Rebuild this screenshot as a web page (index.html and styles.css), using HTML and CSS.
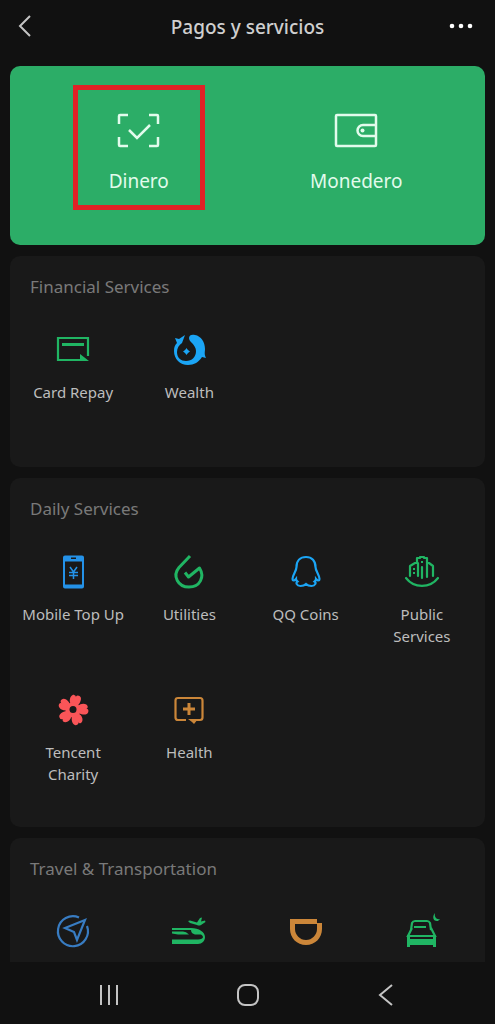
FILE: index.html
```html
<!DOCTYPE html>
<html lang="es">
<head>
<meta charset="utf-8">
<meta name="viewport" content="width=device-width, initial-scale=1">
<title>Pagos y servicios</title>
<link rel="stylesheet" href="styles.css">
</head>
<body>
<header class="topbar">
  <button class="icon-button" aria-label="Volver"><svg width="20" height="28" viewBox="0 0 20 28"><path class="line" d="M16 3 6 13l10 10"/></svg></button>
  <h1 class="title">Pagos y servicios</h1>
  <button class="icon-button" aria-label="Más"><svg width="24" height="28" viewBox="0 0 24 28" fill="#fff"><circle cx="3" cy="13" r="2.3"/><circle cx="12" cy="13" r="2.3"/><circle cx="21" cy="13" r="2.3"/></svg></button>
</header>

<main class="content">
  <section class="hero">
    <button class="hero-item hero-item-marked">
      <svg width="48" height="48" viewBox="0 0 48 48"><path class="hero-line" d="M4 17V9q0-1 1-1h8M34 8h8q1 0 1 1v8M43 30v8q0 1-1 1h-8M13 39H5q-1 0-1-1v-8M14 23l8 8 13-13"/></svg>
      <span>Dinero</span>
    </button>
    <button class="hero-item">
      <svg width="48" height="48" viewBox="0 0 48 48"><rect class="hero-line" x="4" y="8" width="40" height="31" rx="1"/><path class="hero-line" d="M44 18H31a5.500 5.500 0 0 0 0 11h13"/><circle cx="30.500" cy="23.500" r="2" fill="#e2fbec"/></svg>
      <span>Monedero</span>
    </button>
  </section>

  <section class="card">
    <h2 class="card-title">Financial Services</h2>
    <div class="grid">
      <button class="service green">
        <svg width="40" height="40" viewBox="0 0 40 40"><path class="stroke" d="M35 26V8H5v22h23"/><path class="fill" d="M9 13h22v3H9zM27 24l9 7h-9z"/></svg>
        <span>Card Repay</span>
      </button>
      <button class="service sky">
        <svg width="40" height="40" viewBox="0 0 40 40"><path class="fill" d="M6 8l4 1 6-4-3 8c-3 2-5 5-5 9 0 6 4 9 9 9 6 0 10-4 10-10 0-3-2-6-4-8-2-2-3-3-3-5 0-3 3-4 6-3 6 1 10 7 10 14 0 3-1 5 1 9l-4-1c-3 5-8 8-14 8C11 35 5 29 5 21c0-4 1-6 3-8z"/><path class="fill" d="M17.500 18Q18.500 20.500 21 21.500q-2.500 1-3.500 3.500Q16.500 22.500 14 21.500q2.500-1 3.500-3.500z"/><circle class="fill" cx="17.500" cy="21.500" r="2"/></svg>
        <span>Wealth</span>
      </button>
    </div>
  </section>

  <section class="card">
    <h2 class="card-title">Daily Services</h2>
    <div class="grid">
      <button class="service blue">
        <svg width="40" height="40" viewBox="0 0 40 40"><path class="fill" fill-rule="evenodd" d="M12 3.500h17q2 0 2 2v29q0 2-2 2H12q-2 0-2-2v-29q0-2 2-2zm0 6v23h17v-23zM18 5.500V7h5V5.500z"/><path class="stroke thin" d="M17 15l3.500 5 3.500-5M20.500 20v7M16 20.500h9M16 23.500h9"/></svg>
        <span>Mobile Top Up</span>
      </button>
      <button class="service green">
        <svg width="40" height="40" viewBox="0 0 40 40"><path class="stroke bold" d="M21 4 10 15.500C3 24 9 35 20 35c11 0 16-10 10.500-19L19.500 25 16 20.500"/></svg>
        <span>Utilities</span>
      </button>
      <button class="service sky">
        <svg width="40" height="40" viewBox="0 0 40 40"><path class="stroke" d="M20 5c-6 0-9.500 4-9.500 10 0 4-4 8-4 12 0 2 2 2 3.500 0 0 1 1 2 1.500 2.500-2 1-1 4.500 3 4.500 2.500 0 4.500-1 5.500-2 1 1 3 2 5.500 2 4 0 5-3.500 3-4.500.5-.5 1.500-1.500 1.500-2.500 1.500 2 3.500 2 3.500 0 0-4-4-8-4-12C29.500 9 26 5 20 5z"/></svg>
        <span>QQ Coins</span>
      </button>
      <button class="service green">
        <svg width="40" height="40" viewBox="0 0 40 40"><path class="stroke round" d="M4 26c8 10.500 24 10.500 32 0M8 24V14l5-3h3v13M15 11V6h3V5h4v1h3v19M25 11h2l4 3v10M20 15v11"/><path class="fill" d="M11 16h2v2h-2zM11 20h2v2h-2zM19 9h2v2h-2z"/></svg>
        <span>Public Services</span>
      </button>
      <button class="service red">
        <svg width="40" height="40" viewBox="0 0 40 40">
          <defs><g id="petal"><path d="M-2-2-5-8C-6-12-4-15-2-15Q0-15 0-13.500 1-16 3.500-15C6-14 6-11 5-8L2-2z"/></g></defs>
          <g class="fill" transform="translate(20 20)"><use href="#petal" transform="rotate(12)"/><use href="#petal" transform="rotate(84)"/><use href="#petal" transform="rotate(156)"/><use href="#petal" transform="rotate(228)"/><use href="#petal" transform="rotate(300)"/><circle r="7.500"/></g>
          <circle cx="20" cy="19.500" r="3.500" fill="#191919"/>
        </svg>
        <span>Tencent Charity</span>
      </button>
      <button class="service amber">
        <svg width="40" height="40" viewBox="0 0 40 40"><path class="stroke" d="M17 30H9q-2.500 0-2.500-2.500v-17Q6.500 8 9 8h22q2.500 0 2.500 2.500v17Q33.500 30 31 30h-4"/><path class="fill" d="M18.500 13h3v4.500H26v3h-4.500V25h-3v-4.500H14v-3h4.500zM19 29h10l-4 5-2-2z"/></svg>
        <span>Health</span>
      </button>
    </div>
  </section>

  <section class="card">
    <h2 class="card-title">Travel &amp; Transportation</h2>
    <div class="grid">
      <button class="service steel" aria-label="Mobility">
        <svg width="40" height="40" viewBox="0 0 40 40"><path class="stroke" d="M26 5.500A15 15 0 1 0 34 14"/><path class="stroke" d="M32 8 12 16l9 4 3 8z"/></svg>
      </button>
      <button class="service green" aria-label="Rail and flights">
        <svg width="40" height="40" viewBox="0 0 40 40"><path class="fill" fill-rule="evenodd" d="M3 16h19c8 0 14 4 14 9 0 4-3 7-7 7H3v-4.500h26c3 0 5-1 5-2.500q0-1.500-2-2.500h-6q-4-1-4-4.500H3z"/><path class="fill" d="M3 19.500h11q3 0 6 3H9l-6-1z"/><path class="fill" d="M19 9l2-.5 7 2L31 6l2-.5-1 4 4-1 .5 1.500-4.500 3q-2 1-4 0l-7-2z"/></svg>
      </button>
      <button class="service amber" aria-label="Ride hailing">
        <svg width="40" height="40" viewBox="0 0 40 40"><path class="fill" fill-rule="evenodd" d="M4 7h27v4h5v6c0 9-7 16-16 16S4 26 4 17zm5 5v5c0 6 5 11 11 11s11-5 11-11v-5z"/></svg>
      </button>
      <button class="service green" aria-label="Hotels">
        <svg width="40" height="40" viewBox="0 0 40 40"><path class="stroke" d="M9 18l1-7q1-2 3-2h12q2 0 3 2l1 7M12 15h12M10 16l-4 8h27l-4-8"/><path class="fill" d="M5 23h3v4h23v-4h3v12h-3v-2H8v2H5zM33 1c-1 4 2 7 5 6-3 5-10 0-5-6z"/></svg>
      </button>
    </div>
  </section>
</main>

<nav class="navbar" aria-label="Sistema">
  <button class="nav-button" aria-label="Recientes"><svg width="24" height="24" viewBox="0 0 24 24"><path class="line" d="M4 2v20M12 2v20M20 2v20"/></svg></button>
  <button class="nav-button" aria-label="Inicio"><svg width="24" height="24" viewBox="0 0 24 24"><rect class="line" x="2" y="2" width="20" height="20" rx="7"/></svg></button>
  <button class="nav-button" aria-label="Atrás"><svg width="24" height="24" viewBox="0 0 24 24"><path class="line" d="M17 2 5 12l12 10"/></svg></button>
</nav>
</body>
</html>
```
FILE: styles.css
```css
* {
  box-sizing: border-box;
}

body {
  margin: 0;
  height: 100vh;
  display: flex;
  flex-direction: column;
  background: #111;
  color: #bdbdbd;
  font-family: "Noto Sans", sans-serif;
}

button {
  margin: 0;
  padding: 0;
  border: 0;
  background: none;
  color: inherit;
  font: inherit;
}

svg {
  display: block;
  flex: none;
}

.line {
  fill: none;
  stroke: #c4c4c4;
  stroke-width: 2;
}

.topbar {
  flex: none;
  height: 54px;
  margin-bottom: 12px;
  padding: 0 22px 0 14px;
  display: grid;
  grid-template-columns: 32px 1fr 24px;
  align-items: center;
}

.title {
  margin: 0;
  font-size: 19px;
  line-height: 28px;
  font-weight: 500;
  text-align: center;
  color: #cfcfcf;
}

.content {
  flex: 1;
  min-height: 0;
  overflow: hidden;
  padding: 0 10px;
  display: flex;
  flex-direction: column;
  gap: 11px;
}

.hero {
  flex: none;
  display: grid;
  grid-template-columns: 1fr 1fr;
  justify-items: center;
  padding: 19px 20px 35px;
  border-radius: 10px;
  background: #2cad67;
}

.hero-item {
  width: 132px;
  height: 125px;
  padding-top: 17px;
  border: 5px solid transparent;
  display: flex;
  flex-direction: column;
  align-items: center;
  gap: 12px;
  font-size: 19px;
  line-height: 28px;
  color: #e2fbec;
}

.hero-item-marked {
  border-color: #e02226;
}

.hero-line {
  fill: none;
  stroke: #e2fbec;
  stroke-width: 2.5;
}

.card {
  flex: none;
  padding: 19px 5px 42px;
  border-radius: 10px;
  background: #191919;
}

.card-title {
  margin: 0 15px 31px;
  font-size: 17px;
  line-height: 24px;
  font-weight: 400;
  color: #797979;
}

.grid {
  display: grid;
  grid-template-columns: repeat(4, 1fr);
  row-gap: 43px;
}

.service {
  min-height: 95px;
  display: flex;
  flex-direction: column;
  align-items: center;
  gap: 11px;
  font-size: 15px;
  line-height: 22px;
}

.service span {
  max-width: 102px;
  color: #bdbdbd;
}

.fill {
  fill: currentColor;
}

.stroke {
  fill: none;
  stroke: currentColor;
  stroke-width: 2.2;
}

.thin {
  stroke-width: 1.5;
}

.bold {
  stroke-width: 3;
  stroke-linejoin: round;
}

.round {
  stroke-linecap: round;
  stroke-linejoin: round;
}

.green { color: #20b563; }
.sky { color: #1ba5f5; }
.blue { color: #2492e8; }
.red { color: #fa5558; }
.amber { color: #cb8639; }
.steel { color: #387cc2; }

.navbar {
  flex: none;
  height: 62px;
  padding: 4px 39px 0;
  display: grid;
  grid-template-columns: repeat(3, 1fr);
}

.nav-button {
  display: flex;
  align-items: center;
  justify-content: center;
}
```
